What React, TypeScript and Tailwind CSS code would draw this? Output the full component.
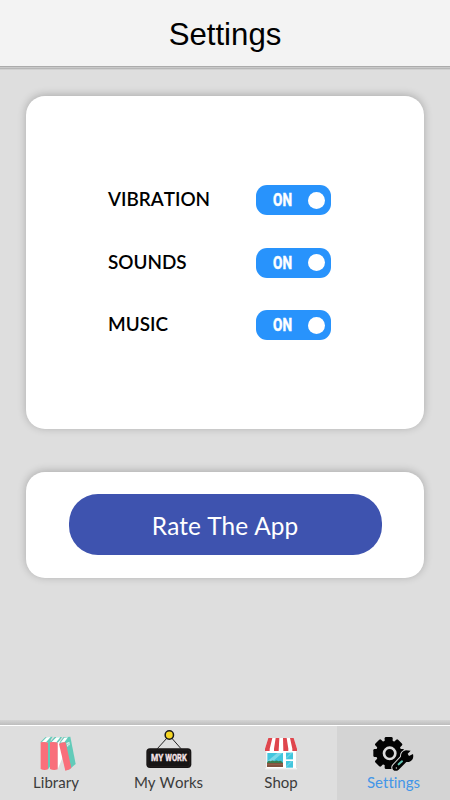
import type { ReactNode } from 'react';

function Toggle() {
  return (
    <button
      role="switch"
      aria-checked="true"
      className="flex h-[30px] w-[75px] items-center justify-between rounded-[11px] bg-[#2893fc] pr-[6px] pl-[14px]"
    >
      <svg width="26" height="26" viewBox="0 0 26 26">
        <text
          x="3"
          y="19"
          textLength="19"
          lengthAdjust="spacingAndGlyphs"
          fill="#fff"
          stroke="#fff"
          strokeWidth="0.5"
          className="font-['Roboto','Liberation_Sans',sans-serif] text-[17.5px] font-bold"
        >
          ON
        </text>
      </svg>
      <span className="h-[17px] w-[17px] rounded-full bg-white" />
    </button>
  );
}

function LibraryIcon() {
  return (
    <svg className="h-[44px] w-[112px]" viewBox="0 24 336 132">
      <path d="M121 67L136 52L158 50L146 68Z" fill="#62cbb9" />
      <path d="M126 66L140 52L152 51L138 67Z" fill="#fff" />
      <path d="M144 68L152 58V137L144 148Z" fill="#62cbb9" />
      <path d="M122 67Q134 64 144 68V148Q132 152 122 147Z" fill="#f96f7b" />
      <path d="M150 67L164 51H186L174 68Z" fill="#62cbb9" />
      <path d="M155 66L169 52H181L169 67Z" fill="#fff" />
      <path d="M173 68L180 63L188 112L173 148Z" fill="#fff" />
      <path d="M150 67Q162 64 173 68V148Q161 152 150 147Z" fill="#f96f7b" />
      <path d="M178 69L190 52L211 50L227 132L206 150Z" fill="#62cbb9" />
      <path d="M181 68L193 53L204 52L193 67Z" fill="#fff" />
      <path d="M177 72Q185 65 197 67L214 144Q207 151 196 152Z" fill="#f96f7b" />
      <path d="M199 69L208 65L210 74L202 81Z" fill="#d7eee9" />
      <path d="M202 75L207 70M204 79L209 74" stroke="#62cbb9" strokeWidth="2" />
    </svg>
  );
}

function WorksIcon() {
  return (
    <svg className="h-[44px] w-[113px]" viewBox="0 24 339 132">
      <path d="M166 53L136 86M178 53L207 86" fill="none" stroke="#252424" strokeWidth="3" />
      <circle cx="172" cy="45" r="12.5" fill="#f6d624" stroke="#191919" strokeWidth="4.5" />
      <rect x="103" y="85" width="135" height="59" rx="11" fill="#171515" />
      <rect x="108" y="90" width="125" height="49" rx="7" fill="none" stroke="#282323" strokeWidth="2" />
      <g
        fill="#f5e3e7"
        stroke="#f5e3e7"
        strokeWidth="1"
        className="font-['Roboto','Liberation_Sans',sans-serif] text-[28px] font-bold"
      >
        <text x="117" y="124" textLength="37" lengthAdjust="spacingAndGlyphs">
          MY
        </text>
        <text x="160" y="124" textLength="64" lengthAdjust="spacingAndGlyphs">
          WORK
        </text>
      </g>
    </svg>
  );
}

function ShopIcon() {
  return (
    <svg className="h-[44px] w-[112px]" viewBox="0 24 336 132">
      <path d="M124 88H213V146H124Z" fill="#fff" />
      <path d="M121 144H216V148H121Z" fill="#f3f3f3" />
      <path d="M130 54H206L216 86V94H120V86Z" fill="#fff" />
      <path d="M130 54H142L134 87V93H120V86Z" fill="#df464d" />
      <path d="M152 54H163L161 93H147V86Z" fill="#df464d" />
      <path d="M174 54H185L190 86V93H175Z" fill="#df464d" />
      <path d="M195 54H206L216 86V93H202V86Z" fill="#df464d" />
      <rect x="127" y="99" width="47" height="32" fill="#42c5dd" />
      <path d="M127 124L157 99H172L135 131H127Z" fill="#7ed9e9" />
      <path d="M126 128Q130 119 137 124Q143 119 148 124Q155 119 160 124Q167 119 173 127V132H126Z" fill="#397e51" />
      <rect x="126" y="129" width="48" height="12" fill="#81513f" />
      <path d="M126 133H174" stroke="#a26b51" strokeWidth="2" />
      <rect x="183" y="98" width="21" height="20" fill="#42c5dd" />
      <rect x="183" y="123" width="21" height="20" fill="#42c5dd" />
      <path d="M183 112L197 98H204L183 118ZM183 138L198 123H204L183 143Z" fill="#66d2e4" />
    </svg>
  );
}

function SettingsIcon() {
  return (
    <svg className="h-[44px] w-[113px]" viewBox="0 24 339 132">
      <g fill="#030303">
        <circle cx="155" cy="99" r="38" />
        <rect x="143" y="51" width="24" height="96" rx="4" />
        <rect x="143" y="51" width="24" height="96" rx="4" transform="rotate(45 155 99)" />
        <rect x="143" y="53" width="24" height="92" rx="4" transform="rotate(90 155 99)" />
        <rect x="143" y="51" width="24" height="96" rx="4" transform="rotate(135 155 99)" />
      </g>
      <circle cx="158" cy="100" r="17" fill="#030303" stroke="#dadada" strokeWidth="8" />
      <path
        d="M169 135L192 110Q191 95 207 91L221 92L212 101L216 108L228 102Q232 121 216 126L208 126L185 149Q176 156 168 149Q163 142 169 135Z"
        fill="#030303"
        stroke="#d4d4d4"
        strokeWidth="6"
        strokeLinejoin="round"
        paintOrder="stroke"
      />
      <path d="M185 133L195 124" stroke="#61c5b4" strokeWidth="6" strokeLinecap="round" />
      <circle cx="178" cy="144" r="2" fill="#dadada" />
    </svg>
  );
}

function Tab({ icon, label, className }: { icon: ReactNode; label: string; className: string }) {
  return (
    <button className={`flex h-full flex-col items-center pt-[2px] ${className}`}>
      {icon}
      <span className="text-[15px] leading-[20px] whitespace-nowrap">{label}</span>
    </button>
  );
}

export default function App() {
  return (
    <div className="flex h-[800px] w-[450px] flex-col overflow-hidden bg-[#dedede] font-['Lato','Noto_Sans',sans-serif] [font-kerning:none] [font-variant-ligatures:none]">
      <header className="flex h-[66px] shrink-0 items-center justify-center bg-[#f3f3f3] pt-[3px]">
        <h1 className="font-['Liberation_Sans',Arial,sans-serif] text-[31.2px] leading-[36px] text-black">Settings</h1>
      </header>
      <div className="h-px shrink-0 bg-[#ababab]" />
      <div className="h-px shrink-0 bg-[#c9c9c9]" />
      <div className="h-px shrink-0 bg-[#b7b7b7]" />
      <div className="h-px shrink-0 bg-[#d0d0d0]" />
      <main className="flex flex-1 flex-col px-[26px] pt-[26px]">
        <section className="flex h-[333px] flex-col gap-[32.5px] rounded-[19px] bg-white pt-[89px] pr-[93px] pl-[82px] shadow-[0_-1px_9px_0px_rgba(0,0,0,0.24)]">
          <div className="flex h-[30px] items-center justify-between">
            <span className="pb-[2px] text-[18.9px] leading-[24px] font-semibold text-black">VIBRATION</span>
            <Toggle />
          </div>
          <div className="flex h-[30px] items-center justify-between">
            <span className="pb-[2px] text-[18.9px] leading-[24px] font-semibold text-black">SOUNDS</span>
            <Toggle />
          </div>
          <div className="flex h-[30px] items-center justify-between">
            <span className="pb-[2px] text-[18.9px] leading-[24px] font-semibold text-black">MUSIC</span>
            <Toggle />
          </div>
        </section>
        <section className="mt-[43px] flex h-[106px] flex-col items-center rounded-[19px] bg-white pt-[22px] shadow-[0_-1px_9px_0px_rgba(0,0,0,0.24)]">
          <button className="h-[61px] w-[313px] rounded-[29px] bg-[#3e53af] pt-[3px] text-[24.4px] text-white">
            Rate The App
          </button>
        </section>
      </main>
      <div className="h-[5px] shrink-0 bg-linear-to-b from-[#d4d4d4] to-[#bdbdbd]" />
      <nav className="flex h-[75px] shrink-0 border-t border-white bg-[#dedede]">
        <Tab icon={<LibraryIcon />} label="Library" className="w-[112px] text-[#3b3b3b]" />
        <Tab icon={<WorksIcon />} label="My Works" className="w-[113px] text-[#3b3b3b]" />
        <Tab icon={<ShopIcon />} label="Shop" className="w-[112px] text-[#3b3b3b]" />
        <Tab icon={<SettingsIcon />} label="Settings" className="w-[113px] bg-[#d4d4d4] text-[#4396e8]" />
      </nav>
    </div>
  );
}
